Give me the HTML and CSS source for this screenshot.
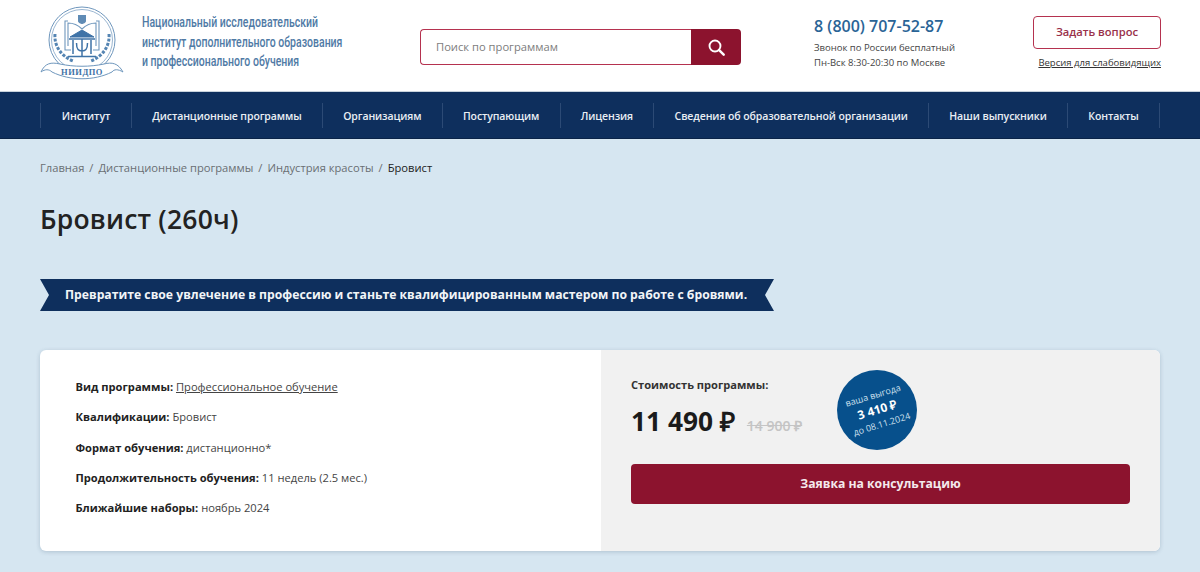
FILE: index.html
```html
<!DOCTYPE html>
<html lang="ru">
<head>
<meta charset="utf-8">
<title>Бровист (260ч)</title>
<link rel="stylesheet" href="styles.css">
</head>
<body>
<header class="header">
  <a class="brand" href="#">
    <svg class="logo" viewBox="0 0 86 76" width="86" height="76" fill="none" stroke="#6f97bd">
      <circle cx="42" cy="34" r="33" stroke-width="1"/>
      <circle cx="42" cy="34" r="30.5" stroke-width=".7"/>
      <path d="M38 9H46V15C46 17 43 18 42 18C41 18 38 17 38 15Z" fill="#5f8bb5" stroke="none"/>
      <path d="M42 23C37 18 33 17 28 17V40M42 23C47 18 51 17 56 17V40" stroke-width="1.1"/>
      <path d="M28 15H25V44H31M56 15H59V44H53" stroke-width="1.1"/>
      <path d="M30 31L42 24L54 31Z" fill="#3f73a7" stroke="#3f73a7"/>
      <path d="M29 33H55M33 34V48M51 34V48M42 33V50M36.500 37C36.500 43 38 45 42 45C46 45 47.500 43 47.500 37M28 50.500H56" stroke="#3f73a7" stroke-width="1.5"/>
      <path d="M15 28C14 40 21 50 33 55M69 28C70 40 63 50 51 55" stroke="#5585b3" stroke-width="3" stroke-dasharray="3 1.500"/>
      <path d="M1 66C5 57 11 56 20 58C34 61 50 61 64 58C72 56 78 57 83 66C78 63 74 63 72 66C54 75 30 75 12 66C9 63 5 63 1 66Z" fill="#fff" stroke-width="1"/>
      <text x="42" y="69" text-anchor="middle" class="logo-text">НИИДПО</text>
    </svg>
    <span class="brand-name">Национальный исследовательский<br>институт дополнительного образования<br>и профессионального обучения</span>
  </a>
  <form class="search">
    <span class="search-field">Поиск по программам</span>
    <button class="search-btn" type="button" aria-label="Поиск">
      <svg viewBox="0 0 18 18" width="17" height="17" fill="none" stroke="#fff" stroke-width="2"><circle cx="7.4" cy="7.4" r="5.8"/><path d="M11.8 11.8L16.6 16.6" stroke-width="2.6" stroke-linecap="round"/></svg>
    </button>
  </form>
  <div class="contact">
    <div class="phone">8 (800) 707-52-87</div>
    <p class="contact-note">Звонок по России бесплатный<br>Пн-Вск 8:30-20:30 по Москве</p>
  </div>
  <div class="actions">
    <a class="ask" href="#">Задать вопрос</a>
    <a class="impaired" href="#">Версия для слабовидящих</a>
  </div>
</header>
<nav class="nav">
  <a href="#">Институт</a>
  <a href="#">Дистанционные программы</a>
  <a href="#">Организациям</a>
  <a href="#">Поступающим</a>
  <a href="#">Лицензия</a>
  <a href="#">Сведения об образовательной организации</a>
  <a href="#">Наши выпускники</a>
  <a href="#">Контакты</a>
</nav>
<main class="main">
  <div class="crumbs"><a href="#">Главная</a><i>/</i><a href="#">Дистанционные программы</a><i>/</i><a href="#">Индустрия красоты</a><i>/</i><b>Бровист</b></div>
  <h1 class="title">Бровист (260ч)</h1>
  <div class="ribbon">Превратите свое увлечение в профессию и станьте квалифицированным мастером по работе с бровями.</div>
  <section class="card">
    <div class="info">
      <p><b>Вид программы:</b> <a href="#">Профессиональное обучение</a></p>
      <p><b>Квалификации:</b> Бровист</p>
      <p><b>Формат обучения:</b> дистанционно*</p>
      <p><b>Продолжительность обучения:</b> 11 недель (2.5 мес.)</p>
      <p><b>Ближайшие наборы:</b> ноябрь 2024</p>
    </div>
    <div class="price-panel">
      <div class="price-top">
        <div>
          <div class="price-label">Стоимость программы:</div>
          <div class="price-row"><span class="price">11 490 ₽</span><s class="old-price">14 900 ₽</s></div>
        </div>
        <div class="badge">
          <div class="badge-text"><span>ваша выгода</span><b>3 410 ₽</b><span>до 08.11.2024</span></div>
        </div>
      </div>
      <a class="cta" href="#">Заявка на консультацию</a>
    </div>
  </section>
</main>
</body>
</html>
```
FILE: styles.css
```css
* { box-sizing: border-box; }
html, body { margin: 0; height: 572px; overflow: hidden; }
body { font-family: "Open Sans", sans-serif; color: #222; background: #d6e6f1; }
a { color: inherit; text-decoration: none; }
p { margin: 0; }

.header { height: 92px; background: #fff; border-bottom: 1px solid #c8d3dc; padding: 0 39px 0 40px; display: flex; align-items: flex-start; }
.brand { display: flex; width: 380px; padding-top: 6px; }
.logo { flex: none; width: 86px; height: 76px; }
.logo-text { font-family: "Liberation Serif", serif; font-size: 8.5px; font-weight: 700; fill: #3f73a7; stroke: none; letter-spacing: .5px; }
.brand-name { margin: 7px 0 0 16px; font-family: "Roboto", sans-serif; font-size: 14px; line-height: 19.5px; font-weight: 500; color: #4f7aa5; white-space: nowrap; transform: scaleX(.75); transform-origin: left top; }

.search { display: flex; width: 321px; height: 36px; margin-top: 29px; }
.search-field { flex: 1; border: 1px solid #b5324f; border-right: 0; border-radius: 4px 0 0 4px; padding-left: 15px; font-size: 11.2px; line-height: 33px; color: #7d7d7d; }
.search-btn { width: 50px; border: 0; padding: 0; background: #8c132e; border-radius: 0 4px 4px 0; display: flex; align-items: center; justify-content: center; }

.contact { margin: 15px 0 0 73px; width: 219px; }
.phone { font-size: 16px; line-height: 22px; font-weight: 600; color: #2a6496; }
.contact-note { margin-top: 3px; font-size: 9.5px; line-height: 15px; color: #444; white-space: nowrap; }

.actions { width: 128px; margin-top: 16px; display: flex; flex-direction: column; align-items: flex-end; }
.ask { width: 128px; height: 33px; border: 1px solid #b5324f; border-radius: 4px; text-align: center; font-size: 11.2px; font-weight: 600; line-height: 29px; color: #99304a; }
.impaired { margin-top: 7px; font-size: 9.5px; line-height: 13px; color: #333; text-decoration: underline; white-space: nowrap; }

.nav { height: 47px; background: #0e2f5d; border-bottom: 1px solid #0a2448; padding: 11px 40px 10px; display: flex; justify-content: space-between; }
.nav a { flex: auto; display: flex; align-items: center; justify-content: center; border-left: 1px solid #2c4a75; font-size: 10.5px; font-weight: 600; letter-spacing: -.1px; color: #e9eef4; white-space: nowrap; }
.nav a:first-child { flex-basis: 91px; flex-grow: 0; }
.nav a:last-child { border-right: 1px solid #2c4a75; }

.main { padding: 0 40px; }
.crumbs { margin-top: 21px; font-size: 11.2px; line-height: 16px; color: #6a6f73; display: flex; }
.crumbs i { font-style: normal; margin: 0 5px; }
.crumbs b { font-weight: 400; color: #222; }
.title { margin: 25px 0 0; font-size: 26.5px; line-height: 36px; font-weight: 600; letter-spacing: .2px; color: #222; }
.ribbon { margin-top: 42px; width: 734px; height: 32px; background: #0e2f5d; color: #f2f5f8; font-size: 12.2px; font-weight: 700; line-height: 31px; padding-left: 25px; white-space: nowrap; clip-path: polygon(0 0, 100% 0, calc(100% - 9px) 50%, 100% 100%, 0 100%, 9px 50%); }

.card { margin-top: 39px; height: 201px; display: flex; background: #fff; border-radius: 6px; overflow: hidden; box-shadow: 0 1px 4px rgba(40, 70, 100, .22); }
.info { width: 561px; padding: 27px 0 0 35.5px; font-size: 11.15px; color: #444; }
.info p { height: 30.3px; line-height: 20px; }
.info b { font-weight: 700; color: #222; }
.info a { text-decoration: underline; }
.price-panel { flex: 1; background: #f1f1f1; padding: 20px 30px 0; }
.price-top { display: flex; height: 94px; }
.price-top > div:first-child { width: 206px; padding-top: 6px; }
.price-label { font-size: 11.1px; line-height: 18px; font-weight: 700; color: #333; }
.price-row { margin-top: 10px; display: flex; align-items: baseline; white-space: nowrap; }
.price { font-size: 26.3px; line-height: 34px; font-weight: 700; color: #1b1b1b; }
.old-price { margin-left: 12px; font-size: 14px; font-weight: 600; color: #c4c4c4; }
.badge { width: 80px; height: 80px; border-radius: 50%; background: #07508c; display: flex; align-items: center; justify-content: center; }
.badge-text { transform: rotate(-17deg); display: flex; flex-direction: column; align-items: center; font-size: 9px; line-height: 14px; color: #cfe0ee; white-space: nowrap; }
.badge-text b { font-size: 12px; line-height: 16px; color: #fff; }
.cta { display: block; height: 40px; background: #8c132e; border-radius: 4px; text-align: center; font-size: 12.2px; font-weight: 700; line-height: 39px; color: #f4e9ec; }
```
